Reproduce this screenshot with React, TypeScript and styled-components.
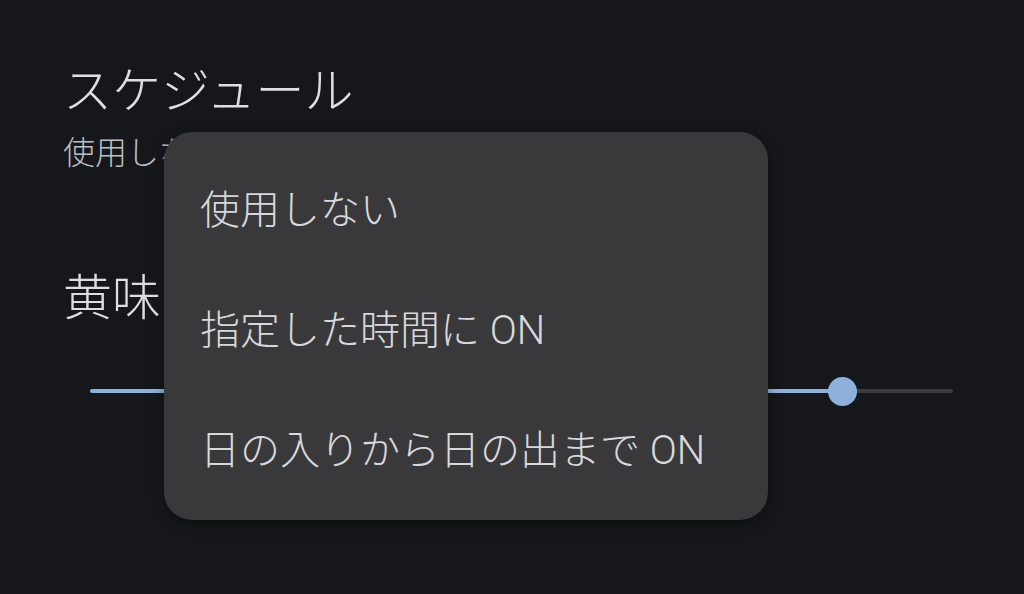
import React from "react"
import styled, { createGlobalStyle } from "styled-components"

const GlobalStyle = createGlobalStyle`
  html, body {
    margin: 0;
    padding: 0;
    background: #16171a;
  }
  body {
    font-family: Roboto, "Noto Sans CJK JP", sans-serif;
  }
`

const Screen = styled.main`
  position: relative;
  width: 1024px;
  height: 594px;
  overflow: hidden;
  background: #16171a;
  color: #dedee0;
`

const Section = styled.section<{ $top: number }>`
  display: flex;
  flex-direction: column;
  padding: ${(p) => p.$top}px 0 0 63px;
`

const Title = styled.div`
  font-size: 49px;
  line-height: 56px;
  font-weight: 300;
  color: #dedee0;
`

const Summary = styled.div`
  margin-top: 13px;
  font-size: 32px;
  line-height: 40px;
  font-weight: 300;
  color: #bdbec2;
`

const SliderRow = styled.div`
  position: relative;
  display: flex;
  align-items: center;
  height: 40px;
  margin: 44px 71px 0 90px;
`

const Track = styled.div`
  flex: 1;
  height: 4px;
  border-radius: 2px;
  background: #3b3c40;
  display: flex;
`

const ActiveTrack = styled.div`
  height: 100%;
  border-radius: 2px;
  background: #8eb1db;
`

const Thumb = styled.div`
  position: absolute;
  top: 50%;
  width: 29px;
  height: 29px;
  margin: -14.5px 0 0 -14.5px;
  border-radius: 50%;
  background: #8eb1db;
`

const Menu = styled.ul`
  position: absolute;
  left: 164px;
  top: 132px;
  width: 604px;
  margin: 0;
  padding: 15px 0 13px;
  list-style: none;
  border-radius: 28px;
  background: #39393c;
  box-shadow: 0 4px 14px rgba(0, 0, 0, 0.35);
`

const MenuItem = styled.li`
  display: flex;
  align-items: center;
  height: 120px;
  padding-left: 36px;
  font-size: 40px;
  font-weight: 300;
  color: #d8d8da;
  white-space: nowrap;
`

const Slider = ({ value }: { value: number }) => (
  <SliderRow>
    <Track>
      <ActiveTrack style={{ width: `${value * 100}%` }} />
    </Track>
    <Thumb style={{ left: `${value * 100}%` }} />
  </SliderRow>
)

const options = ["使用しない", "指定した時間に ON", "日の入りから日の出まで ON"]

export default function App() {
  return (
    <Screen>
      <GlobalStyle />
      <Section $top={64}>
        <Title>スケジュール</Title>
        <Summary>使用しない</Summary>
      </Section>
      <Section $top={98}>
        <Title>黄味</Title>
      </Section>
      <Slider value={(842 - 90) / (953 - 90)} />
      <Menu>
        {options.map((o) => (
          <MenuItem key={o}>{o}</MenuItem>
        ))}
      </Menu>
    </Screen>
  )
}
